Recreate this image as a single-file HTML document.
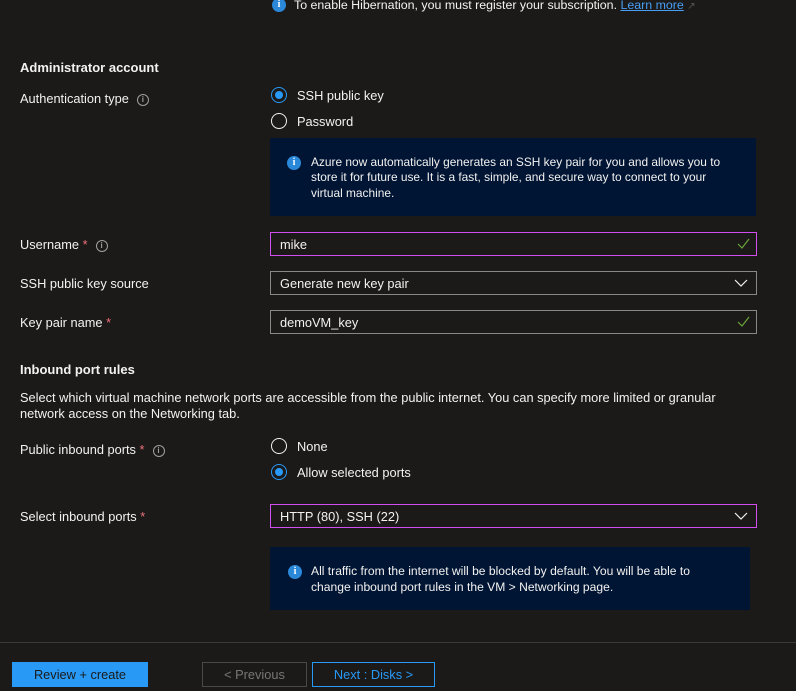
<!DOCTYPE html>
<html><head><style>
body{margin:0;width:796px;height:691px;background:#1b1a19;font-family:"Liberation Sans",sans-serif;font-size:12.8px;color:#f3f2f1;position:relative;overflow:hidden}
.a{position:absolute;white-space:nowrap}
.lbl{left:20px}
.req{color:#f1707b}
.ii{display:inline-block;width:10px;height:10px;border:1px solid #a19f9d;border-radius:50%;font-size:8px;line-height:10px;text-align:center;color:#a19f9d;vertical-align:1px;margin-left:8px;font-weight:bold}
.bi{position:absolute;width:14px;height:14px;border-radius:50%;background:#2b88d8;color:#fff;font-size:10px;line-height:14px;text-align:center;font-weight:bold;font-family:"Liberation Serif",serif}
.radio{position:absolute;left:271px;width:14px;height:14px;border:1px solid #f3f2f1;border-radius:50%}
.radio.on{border-color:#2899f5}
.radio.on:after{content:"";position:absolute;left:3px;top:3px;width:8px;height:8px;border-radius:50%;background:#2899f5}
.box{position:absolute;left:270px;background:#001433}
.inp{position:absolute;left:270px;width:485px;height:22px;border:1px solid #8a8886;box-sizing:content-box}
.inp span{position:absolute;left:9px;top:4px}
.pur{border-color:#d14ff0}
.chk{position:absolute;right:6px;top:4px}
.dd{position:absolute;right:8px;top:6px}
h3{margin:0;font-size:13px;font-weight:bold;position:absolute;left:20px}
</style></head><body>
<div class="bi" style="left:272px;top:-2px">i</div>
<div class="a" style="left:294px;top:-2px;font-size:12.4px">To enable Hibernation, you must register your subscription. <span style="color:#479ef5;text-decoration:underline">Learn more</span> <span style="color:#555;font-size:10px">&#8599;</span></div>

<h3 style="top:60px">Administrator account</h3>
<div class="a lbl" style="top:91px">Authentication type<span class="ii">i</span></div>
<div class="radio on" style="top:87px"></div><div class="a" style="left:297px;top:88px">SSH public key</div>
<div class="radio" style="top:113px"></div><div class="a" style="left:297px;top:114px">Password</div>

<div class="box" style="top:138px;width:486px;height:78px">
<div class="bi" style="left:17px;top:18px">i</div>
<div class="a" style="left:41px;top:17px;line-height:15.3px;font-size:11.9px">Azure now automatically generates an SSH key pair for you and allows you to<br>store it for future use. It is a fast, simple, and secure way to connect to your<br>virtual machine.</div>
</div>

<div class="a lbl" style="top:237px">Username <span class="req">*</span><span class="ii">i</span></div>
<div class="inp pur" style="top:232px"><span>mike</span><svg class="chk" width="13" height="13" viewBox="0 0 13 13"><path d="M1 7l4 4 7-9" fill="none" stroke="#6ba539" stroke-width="1.2"/></svg></div>

<div class="a lbl" style="top:276px">SSH public key source</div>
<div class="inp" style="top:271px"><span>Generate new key pair</span><svg class="dd" width="14" height="10" viewBox="0 0 14 10"><path d="M1 2l6 6 6-6" fill="none" stroke="#f3f2f1" stroke-width="1.2"/></svg></div>

<div class="a lbl" style="top:315px">Key pair name <span class="req">*</span></div>
<div class="inp" style="top:310px"><span>demoVM_key</span><svg class="chk" width="13" height="13" viewBox="0 0 13 13"><path d="M1 7l4 4 7-9" fill="none" stroke="#6ba539" stroke-width="1.2"/></svg></div>

<h3 style="top:362px">Inbound port rules</h3>
<div class="a lbl" style="top:390px;line-height:16px">Select which virtual machine network ports are accessible from the public internet. You can specify more limited or granular<br>network access on the Networking tab.</div>

<div class="a lbl" style="top:442px">Public inbound ports <span class="req">*</span><span class="ii">i</span></div>
<div class="radio" style="top:438px"></div><div class="a" style="left:297px;top:439px">None</div>
<div class="radio on" style="top:464px"></div><div class="a" style="left:297px;top:465px">Allow selected ports</div>

<div class="a lbl" style="top:509px">Select inbound ports <span class="req">*</span></div>
<div class="inp pur" style="top:504px"><span>HTTP (80), SSH (22)</span><svg class="dd" width="14" height="10" viewBox="0 0 14 10"><path d="M1 2l6 6 6-6" fill="none" stroke="#f3f2f1" stroke-width="1.2"/></svg></div>

<div class="box" style="top:547px;width:480px;height:63px">
<div class="bi" style="left:18px;top:18px">i</div>
<div class="a" style="left:41px;top:17px;line-height:15.5px;font-size:12.1px">All traffic from the internet will be blocked by default. You will be able to<br>change inbound port rules in the VM &gt; Networking page.</div>
</div>

<div style="position:absolute;left:0;top:642px;width:796px;height:1px;background:#3b3a39"></div>
<div class="a" style="left:12px;top:662px;width:136px;height:25px;background:#2899f5;color:#1b1a19;text-align:center;line-height:25px">Review + create</div>
<div class="a" style="left:202px;top:662px;width:103px;height:23px;border:1px solid #4a4948;color:#797775;text-align:center;line-height:23px">&lt; Previous</div>
<div class="a" style="left:312px;top:662px;width:121px;height:23px;border:1px solid #2899f5;color:#2899f5;text-align:center;line-height:23px">Next : Disks &gt;</div>
</body></html>
